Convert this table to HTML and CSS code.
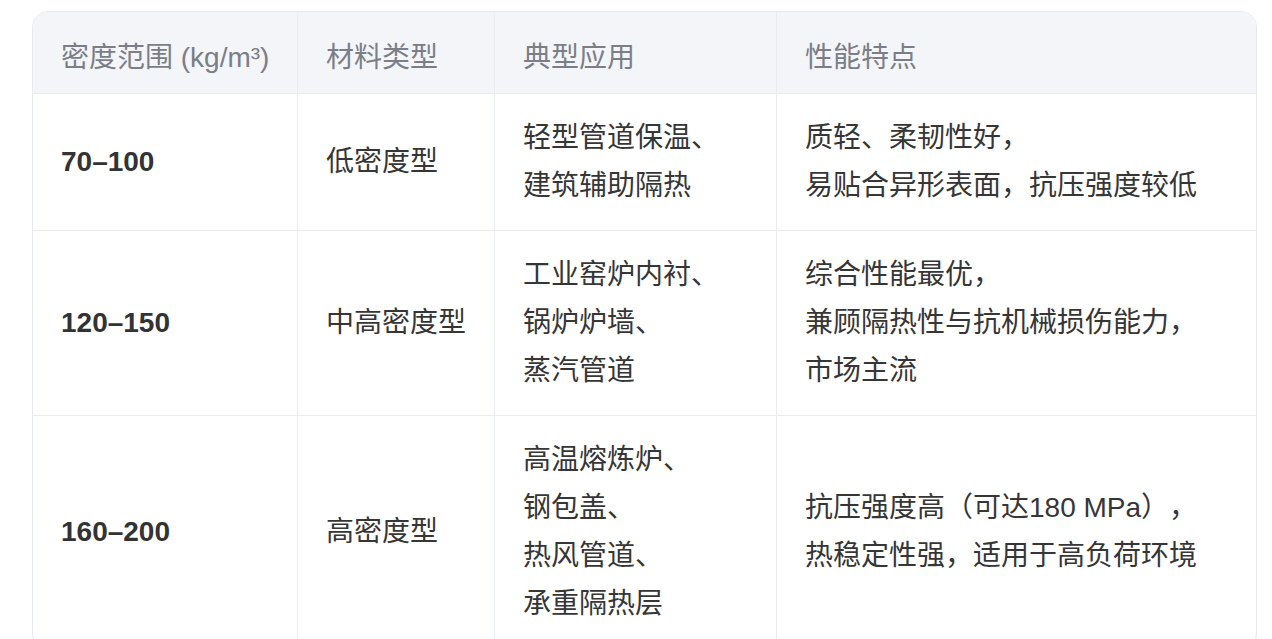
FILE: index.html
```html
<!DOCTYPE html>
<html lang="zh-CN">
<head>
<meta charset="utf-8">
<title>密度范围</title>
<link rel="stylesheet" href="styles.css">
</head>
<body>
<div class="wrap">
  <table class="tbl">
    <colgroup>
      <col class="c1"><col class="c2"><col class="c3"><col class="c4">
    </colgroup>
    <thead>
      <tr>
        <th>密度范围 (kg/m³)</th>
        <th>材料类型</th>
        <th>典型应用</th>
        <th>性能特点</th>
      </tr>
    </thead>
    <tbody>
      <tr>
        <td class="num">70–100</td>
        <td>低密度型</td>
        <td>轻型管道保温、<br>建筑辅助隔热</td>
        <td>质轻、柔韧性好，<br>易贴合异形表面，抗压强度较低</td>
      </tr>
      <tr>
        <td class="num">120–150</td>
        <td>中高密度型</td>
        <td>工业窑炉内衬、<br>锅炉炉墙、<br>蒸汽管道</td>
        <td>综合性能最优，<br>兼顾隔热性与抗机械损伤能力，<br>市场主流</td>
      </tr>
      <tr>
        <td class="num">160–200</td>
        <td>高密度型</td>
        <td>高温熔炼炉、<br>钢包盖、<br>热风管道、<br>承重隔热层</td>
        <td>抗压强度高（可达180 MPa），<br>热稳定性强，适用于高负荷环境</td>
      </tr>
    </tbody>
  </table>
</div>
</body>
</html>
```

FILE: styles.css
```css
html, body {
  margin: 0;
  padding: 0;
  background: #ffffff;
}

body {
  font-family: "Liberation Sans", "Noto Sans CJK SC", sans-serif;
  font-size: 28px;
  color: #333333;
  text-spacing-trim: space-all;
}

.wrap {
  margin: 11px 15px 0 32px;
  border: 1px solid #e9eaed;
  border-radius: 16px;
  overflow: hidden;
}

.tbl {
  width: 100%;
  border-collapse: separate;
  border-spacing: 0;
  table-layout: fixed;
}

.c1 { width: 265px; }
.c2 { width: 197px; }
.c3 { width: 282px; }

.tbl th,
.tbl td {
  text-align: left;
  vertical-align: middle;
  line-height: 48px;
  padding: 20px 28px;
  border-right: 1px solid #ebecef;
  border-bottom: 1px solid #ebecef;
}

.tbl th:last-child,
.tbl td:last-child {
  border-right: none;
}

.tbl th {
  background: #f4f5f8;
  color: #7b7e86;
  font-weight: normal;
  white-space: nowrap;
  padding-top: 22px;
  padding-bottom: 11px;
}

.tbl td {
  color: #363636;
}

.tbl td.num {
  font-weight: bold;
  color: #333333;
}
```
